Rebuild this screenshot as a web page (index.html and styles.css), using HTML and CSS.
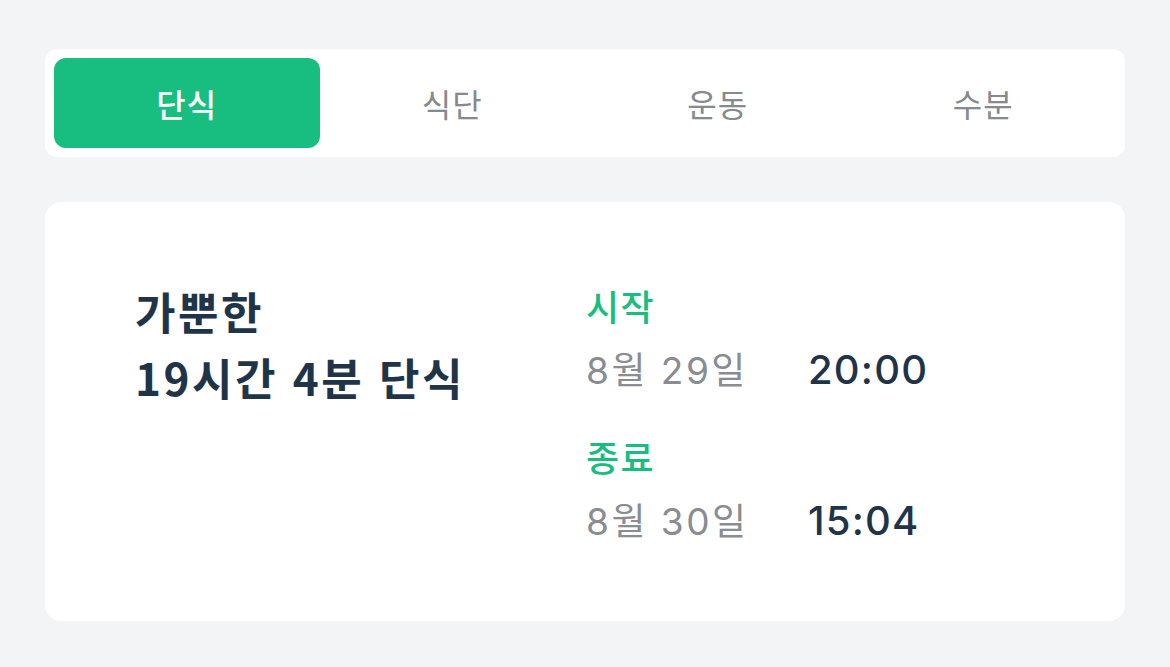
FILE: index.html
```html
<!DOCTYPE html>
<html lang="ko">
<head>
<meta charset="utf-8">
<link rel="stylesheet" href="styles.css">
</head>
<body>
<div class="page">
  <nav class="tabs">
    <div class="tab active">단식</div>
    <div class="tab">식단</div>
    <div class="tab">운동</div>
    <div class="tab">수분</div>
  </nav>
  <section class="card">
    <div class="summary">
      <div>가뿐한</div>
      <div>19시간 4분 단식</div>
    </div>
    <div class="times">
      <div class="block">
        <div class="label">시작</div>
        <div class="row"><span class="date">8월 29일</span><span class="time">20:00</span></div>
      </div>
      <div class="block">
        <div class="label">종료</div>
        <div class="row"><span class="date">8월 30일</span><span class="time">15:04</span></div>
      </div>
    </div>
  </section>
</div>
</body>
</html>
```
FILE: styles.css
```css
* { box-sizing: border-box; }
html, body { margin: 0; padding: 0; }
body {
  background: #f3f4f6;
  font-family: "Inter", "Noto Sans CJK KR", sans-serif;
  width: 1170px;
  height: 667px;
  overflow: hidden;
}
.page {
  padding: 49px 45px 0 45px;
  display: flex;
  flex-direction: column;
  gap: 45px;
}
.tabs {
  background: #fff;
  border-radius: 12px;
  padding: 9px;
  display: grid;
  grid-template-columns: repeat(4, 1fr);
  height: 108px;
}
.tab {
  display: flex;
  align-items: center;
  justify-content: center;
  font-family: "Noto Sans CJK KR", sans-serif;
  font-size: 32px;
  color: #86898d;
  border-radius: 12px;
  letter-spacing: 1px;
}
.tab.active {
  background: #18be7f;
  color: #fff;
  font-weight: 500;
}
.card {
  background: #fff;
  border-radius: 16px;
  height: 419px;
  padding: 76px 90px 0 90px;
  display: flex;
}
.summary {
  width: 451px;
  font-family: "Noto Sans CJK KR", sans-serif;
  font-weight: 600;
  font-size: 44px;
  line-height: 66px;
  color: #1f3448;
  letter-spacing: 2.5px;
}
.times {
  display: flex;
  flex-direction: column;
  gap: 30px;
  padding-top: 2px;
}
.label {
  font-family: "Noto Sans CJK KR", sans-serif;
  font-size: 36px;
  line-height: 50px;
  color: #18be7f;
  font-weight: 500;
  letter-spacing: 1.5px;
}
.row {
  display: flex;
  align-items: baseline;
  line-height: 60px;
  margin-top: 10px;
}
.date {
  width: 222px;
  font-family: "Inter", "Noto Sans CJK KR", sans-serif;
  font-size: 37px;
  color: #898c90;
  letter-spacing: 2.5px;
}
.time {
  font-family: "Inter", sans-serif;
  font-size: 40px;
  font-weight: 500;
  color: #1f3448;
  letter-spacing: 1.2px;
}
```
